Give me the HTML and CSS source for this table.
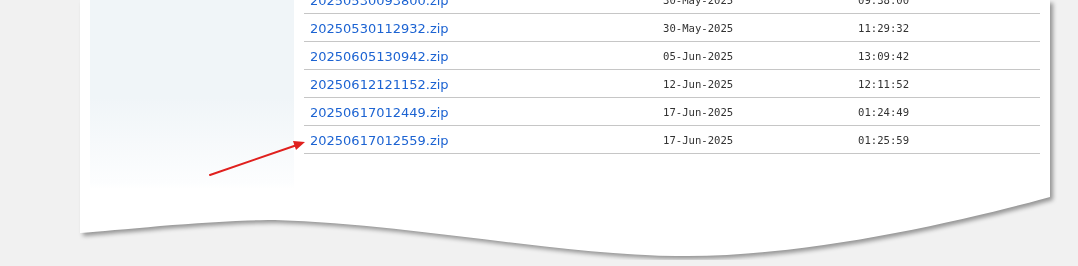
FILE: index.html
```html
<!DOCTYPE html>
<html>
<head>
<meta charset="utf-8">
<link rel="stylesheet" href="styles.css">
</head>
<body>
<div class="paper-wrap">
  <div class="paper">
    <aside class="sidebar"></aside>
    <table class="listing">
      <tr><td class="name"><a href="#">20250530093800.zip</a></td><td class="date">30-May-2025</td><td class="time">09:38:00</td></tr>
      <tr><td class="name"><a href="#">20250530112932.zip</a></td><td class="date">30-May-2025</td><td class="time">11:29:32</td></tr>
      <tr><td class="name"><a href="#">20250605130942.zip</a></td><td class="date">05-Jun-2025</td><td class="time">13:09:42</td></tr>
      <tr><td class="name"><a href="#">20250612121152.zip</a></td><td class="date">12-Jun-2025</td><td class="time">12:11:52</td></tr>
      <tr><td class="name"><a href="#">20250617012449.zip</a></td><td class="date">17-Jun-2025</td><td class="time">01:24:49</td></tr>
      <tr><td class="name"><a href="#">20250617012559.zip</a></td><td class="date">17-Jun-2025</td><td class="time">01:25:59</td></tr>
    </table>
    <svg class="arrow" width="110" height="45" viewBox="0 0 110 45">
      <line x1="3" y1="42" x2="90" y2="12" stroke="#e0201e" stroke-width="2" stroke-linecap="round"/>
      <polygon points="98,9 86,8 89,17" fill="#e0201e"/>
    </svg>
  </div>
</div>
</body>
</html>
```
FILE: styles.css
```css
html, body {
  margin: 0;
  padding: 0;
  background: #f1f1f1;
  overflow: hidden;
}
.paper-wrap {
  margin-left: 80px;
  width: 980px;
  filter: drop-shadow(3px 3px 2px rgba(0, 0, 0, 0.38));
}
.paper {
  position: relative;
  width: 970px;
  height: 260px;
  background: #fff;
  display: flex;
  align-items: flex-start;
  gap: 10px;
  padding-left: 10px;
  box-sizing: border-box;
  clip-path: path('M0 0 H970 V197 C880 222 720 258 597 256 C480 255 330 224 195 220 C130 220 40 230 0 233 Z');
}
.sidebar {
  flex: 0 0 204px;
  height: 189px;
  background: linear-gradient(to bottom, #f0f5f8 0%, #f0f5f8 52%, #fcfdfe 96%, #fff 100%);
}
.listing {
  width: 736px;
  margin-top: -14px;
  border-collapse: collapse;
  font-family: "DejaVu Sans", Verdana, sans-serif;
}
.listing td {
  height: 27px;
  padding: 0 0 0 6px;
  border-bottom: 1px solid #c6c6c6;
  vertical-align: middle;
}
.name { width: 347px; }
.date { width: 189px; }
.name a {
  color: #1c63d2;
  text-decoration: none;
  font-size: 13px;
}
.date, .time {
  font-family: "DejaVu Sans Mono", monospace;
  font-size: 10.6px;
  color: #333;
}
.arrow {
  position: absolute;
  left: 127px;
  top: 133px;
}
```
